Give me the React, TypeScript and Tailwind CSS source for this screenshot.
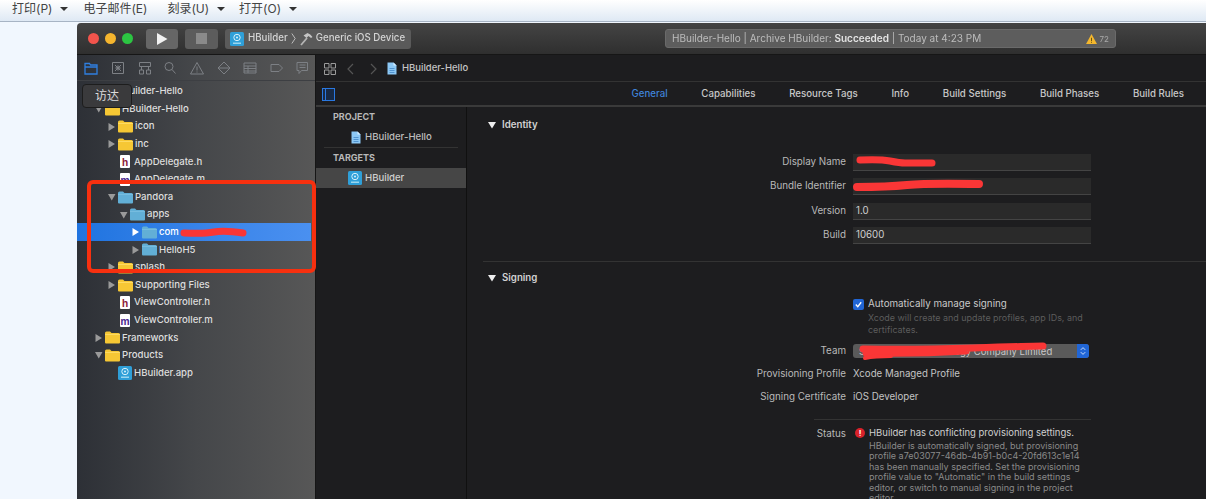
const font = "font-['Inter','Noto_Sans_CJK_SC',sans-serif]";

const Caret = () => <span className="ml-[8px] w-0 h-0 border-x-[4px] border-x-transparent border-t-[4px] border-t-[#333]" />;

const Folder = ({ blue }: { blue?: boolean }) => (
  <svg viewBox="0 0 15 13" className="w-[15px] h-[13px] shrink-0">
    <path d="M0 2q0-1.500 1.500-1.500h3.500l1.500 1.500h7q1.500 0 1.500 1.500v8q0 1-1 1h-13q-1 0-1-1z" fill={blue ? "#62afd6" : "#f6c734"} />
    <path d="M0 3.200h15v.8h-15z" fill={blue ? "#7cc0e2" : "#ffdf6e"} />
  </svg>
);

const CodeFile = ({ letter, color }: { letter: string; color: string }) => (
  <span className="relative w-[10px] h-[13px] ml-[3px] mr-[2px] bg-white rounded-[1px] flex items-end justify-center shrink-0">
    <span className="font-bold text-[10px] leading-[11px]" style={{ color }}>{letter}</span>
  </span>
);

const DocIcon = () => (
  <svg viewBox="0 0 10 13" className="w-[10px] h-[13px] shrink-0">
    <path d="M0.500 0.500h6l3 3v9h-9z" fill="#8cc8f5" />
    <path d="M6.500 0.500l3 3h-3z" fill="#d7eeff" />
    <path d="M2.500 6h5v.8h-5zM2.500 8h5v.8h-5zM2.500 10h5v.8h-5z" fill="#3f83c4" />
  </svg>
);

const AppIcon = () => (
  <svg viewBox="0 0 14 14" className="w-[14px] h-[14px] shrink-0">
    <rect width="14" height="14" rx="1.500" fill="#2f9fd8" />
    <circle cx="7" cy="5.500" r="3.200" fill="none" stroke="#d8f1fb" strokeWidth="1" />
    <circle cx="7" cy="5.500" r="1" fill="#d8f1fb" />
    <path d="M3 10.500h8v1.500h-8z" fill="#9ad6ef" />
  </svg>
);

const Tri = ({ open, white }: { open?: boolean; white?: boolean }) => (
  <svg viewBox="0 0 8 8" className="w-[8px] h-[8px] mr-[2px] shrink-0">
    <path d={open ? "M0 1h7.500l-3.750 6.500z" : "M0.500 0v8l6.500-4z"} fill={white ? "#ffffff" : "#9a9a9a"} />
  </svg>
);

type Row = {
  label: string;
  pad: string;
  kind: "yellow" | "blue" | "h" | "m" | "app" | "doc";
  tri?: "open" | "closed";
  selected?: boolean;
};

const rows: Row[] = [
  { label: "HBuilder-Hello", pad: "pl-[17px]", kind: "doc", tri: "open" },
  { label: "HBuilder-Hello", pad: "pl-[18px]", kind: "yellow", tri: "open" },
  { label: "icon", pad: "pl-[31px]", kind: "yellow", tri: "closed" },
  { label: "inc", pad: "pl-[31px]", kind: "yellow", tri: "closed" },
  { label: "AppDelegate.h", pad: "pl-[40px]", kind: "h" },
  { label: "AppDelegate.m", pad: "pl-[40px]", kind: "m" },
  { label: "Pandora", pad: "pl-[31px]", kind: "blue", tri: "open" },
  { label: "apps", pad: "pl-[43px]", kind: "blue", tri: "open" },
  { label: "com", pad: "pl-[55px]", kind: "blue", tri: "closed", selected: true },
  { label: "HelloH5", pad: "pl-[55px]", kind: "blue", tri: "closed" },
  { label: "splash", pad: "pl-[31px]", kind: "yellow", tri: "closed" },
  { label: "Supporting Files", pad: "pl-[31px]", kind: "yellow", tri: "closed" },
  { label: "ViewController.h", pad: "pl-[40px]", kind: "h" },
  { label: "ViewController.m", pad: "pl-[40px]", kind: "m" },
  { label: "Frameworks", pad: "pl-[18px]", kind: "yellow", tri: "closed" },
  { label: "Products", pad: "pl-[18px]", kind: "yellow", tri: "open" },
  { label: "HBuilder.app", pad: "pl-[40px]", kind: "app" },
];

const RowIcon = ({ row }: { row: Row }) => {
  if (row.kind === "yellow") return <Folder />;
  if (row.kind === "blue") return <Folder blue />;
  if (row.kind === "h") return <CodeFile letter="h" color="#8e1d3c" />;
  if (row.kind === "m") return <CodeFile letter="m" color="#4b2a8f" />;
  if (row.kind === "app") return <span className="ml-[1px]"><AppIcon /></span>;
  return <DocIcon />;
};

const NavIcons = () => (
  <svg viewBox="0 0 230 14" className="w-[230px] h-[14px]" fill="none" stroke="#7d8085" strokeWidth="1">
    <path d="M1 2.500h4.500l1 1.500h6.500v9h-12zM1 6h12" stroke="#2f7fe0" strokeWidth="1.300" />
    <path d="M28.500 1.500h11v11h-11zM31 4l6 6M37 4l-6 6" />
    <circle cx="34" cy="7" r="2" />
    <path d="M55.500 1.500h11v4h-11zM55.500 9h4v4h-4zM62.500 9h4v4h-4zM57.500 5.500v3.500M64.500 5.500v3.500" />
    <circle cx="85" cy="5.500" r="4" />
    <path d="M88 8.500l3.500 4" />
    <path d="M113 1.500l6.500 11.500h-13zM113 5.500v4M113 10.500v1" />
    <path d="M140 1l6 6-6 6-6-6zM134 7h12" />
    <path d="M160 2h12v10h-12zM160 5h12M160 7.500h12M160 10h12M164 5v7" />
    <path d="M187 3.500h8l3.500 3.500-3.500 3.500h-8z" />
    <path d="M213 1.500h10.500v8h-6l-2.500 3v-3h-2zM215.500 4h6M215.500 6.500h6" />
  </svg>
);

const Tree = () => (
  <div className="flex flex-col pt-[1.700px]">
    {rows.map((r) => (
      <div
        key={r.label + r.pad}
        className={
          "flex items-center h-[17.600px] text-[9.600px] font-medium whitespace-nowrap " +
          r.pad +
          (r.selected ? " bg-gradient-to-r from-[#1f74e0] to-[#4a90f0] text-white w-[234px]" : " text-[#dedede]")
        }
      >
        {r.tri ? <Tri open={r.tri === "open"} white={r.selected} /> : null}
        <RowIcon row={r} />
        <span className="ml-[2px]">{r.label}</span>
      </div>
    ))}
  </div>
);

const Sidebar = () => (
  <div className="w-[239px] shrink-0 flex flex-col bg-gradient-to-r from-[#2d3036] via-[#45474a] to-[#575757] border-r border-[#161616]">
    <div className="h-[26px] flex items-center pl-[7px] border-b border-[#3d3f43] shrink-0">
      <NavIcons />
    </div>
    <Tree />
  </div>
);

const tabs = ["General", "Capabilities", "Resource Tags", "Info", "Build Settings", "Build Phases", "Build Rules"];

const Label = ({ children }: { children: React.ReactNode }) => (
  <div className="text-right text-[#b9b9b9] text-[9.800px]">{children}</div>
);

const Field = ({ label, value }: { label: string; value?: string }) => (
  <div className="grid grid-cols-[363px_238px] gap-x-[7px] items-center h-[17px]">
    <Label>{label}</Label>
    <div className="h-[17px] bg-[#2a2a2a] border-b border-[#444] pl-[3px] text-[#d0d0d0] text-[9.700px] leading-[16px]">{value}</div>
  </div>
);

const Section = ({ title }: { title: string }) => (
  <div className="flex items-center pl-[5px] text-[#d2d2d2] font-semibold text-[9.700px]">
    <svg viewBox="0 0 8 8" className="w-[8px] h-[8px] mr-[6px]"><path d="M0 1h8l-4 6.500z" fill="#eeeeee" /></svg>
    {title}
  </div>
);

const Form = () => (
  <div className="flex-1 min-w-0 overflow-hidden pl-[16px] pt-[1px] border-l border-[#101010]">
    <div className="h-[154px] border-b border-[#333]">
      <div className="h-[34px] flex items-center"><Section title="Identity" /></div>
      <div className="mt-[12px] flex flex-col gap-[7.300px]">
        <Field label="Display Name" value="" />
        <Field label="Bundle Identifier" value="" />
        <Field label="Version" value="1.0" />
        <Field label="Build" value="10600" />
      </div>
    </div>
    <div className="h-[32px] flex items-center"><Section title="Signing" /></div>
    <div className="grid grid-cols-[363px_238px] gap-x-[7px]">
      <div />
      <div className="pt-[5px]">
        <div className="flex items-center h-[11px]">
          <span className="w-[11px] h-[11px] rounded-[2px] bg-[#2166d6] flex items-center justify-center mr-[4px]">
            <svg viewBox="0 0 10 10" className="w-[9px] h-[9px]"><path d="M2 5l2.200 2.500 3.800-5" fill="none" stroke="#ffffff" strokeWidth="1.500" /></svg>
          </span>
          <span className="text-[#c9c9c9] text-[9.800px]">Automatically manage signing</span>
        </div>
        <div className="pl-[15px] mt-[2px] text-[#5c5c5c] text-[8.950px] leading-[11.500px] w-[232px]">Xcode will create and update profiles, app IDs, and certificates.</div>
      </div>
    </div>
    <div className="grid grid-cols-[363px_236px] gap-x-[7px] items-center mt-[9px] h-[14px]">
      <Label>Team</Label>
      <div className="relative h-[14px] rounded-[3px] bg-[#5a5a5a] pl-[6px] text-[#c8c8c8] text-[9.500px] leading-[15px] whitespace-nowrap">
        ShXXXXXXX Technology Company Limited
        <span className="absolute right-0 top-0 w-[12px] h-[14px] rounded-r-[3px] bg-[#2166d6] flex items-center justify-center">
          <svg viewBox="0 0 8 12" className="w-[6px] h-[10px]"><path d="M1 4.500l3-3 3 3M1 7.500l3 3 3-3" fill="none" stroke="#ffffff" strokeWidth="1" /></svg>
        </span>
      </div>
    </div>
    <div className="grid grid-cols-[363px_238px] gap-x-[7px] items-center mt-[9px] h-[14px]">
      <Label>Provisioning Profile</Label>
      <div className="text-[#c4c4c4] text-[9.700px]">Xcode Managed Profile</div>
    </div>
    <div className="grid grid-cols-[363px_238px] gap-x-[7px] items-center mt-[9px] h-[14px]">
      <Label>Signing Certificate</Label>
      <div className="text-[#c4c4c4] text-[9.700px]">iOS Developer</div>
    </div>
    <div className="ml-[331px] w-[277px] border-b border-[#333] mt-[15px]" />
    <div className="grid grid-cols-[363px_238px] gap-x-[7px] mt-[7px]">
      <Label>Status</Label>
      <div className="flex">
        <span className="w-[10px] h-[10px] mt-[1px] ml-[2px] mr-[4px] rounded-full bg-[#d8222a] text-white text-[8px] font-bold leading-[10px] text-center shrink-0">!</span>
        <div>
          <div className="text-[#cfcfcf] text-[9.500px] leading-[12px] whitespace-nowrap">HBuilder has conflicting provisioning settings.</div>
          <div className="text-[#8a8a8a] text-[9px] leading-[10.600px] mt-[1.500px] w-[218px]">
            HBuilder is automatically signed, but provisioning profile a7e03077-46db-4b91-b0c4-20fd613c1e14 has been manually specified. Set the provisioning profile value to "Automatic" in the build settings editor, or switch to manual signing in the project editor.
          </div>
        </div>
      </div>
    </div>
  </div>
);

const Main = () => (
  <div className="flex-1 min-w-0 flex flex-col bg-[#1d1d1f]">
    <div className="h-[27px] shrink-0 flex items-center pl-[8px] pt-[1px] border-b border-[#333] text-[#c4c4c4] text-[9.500px] font-medium">
      <svg viewBox="0 0 12 12" className="w-[12px] h-[12px]" fill="none" stroke="#9b9b9b" strokeWidth="1">
        <path d="M.5.500h4.500v4.500h-4.500zM7 .500h4.500v4.500h-4.500zM.5 7h4.500v4.500h-4.500zM7 7h4.500v4.500h-4.500z" />
      </svg>
      <svg viewBox="0 0 30 12" className="w-[30px] h-[12px] ml-[11px] mr-[10px]" fill="none" stroke="#555" strokeWidth="1.200">
        <path d="M6 1l-5 5 5 5M24 1l5 5-5 5" />
      </svg>
      <DocIcon />
      <span className="ml-[5px]">HBuilder-Hello</span>
    </div>
    <div className="h-[25px] shrink-0 flex items-center border-b-2 border-[#3a3a3a] relative">
      <span className="absolute left-[6px] top-[6px] w-[13px] h-[13px] border-[1.500px] border-[#2a78e0] bg-[#182a45]">
        <span className="block w-[3px] h-full border-r border-[#2a78e0]" />
      </span>
      <div className="ml-auto mt-[2px] pr-[22px] flex gap-[33.700px] text-[9.700px] font-medium text-[#c8c8c8]">
        {tabs.map((t, i) => (
          <span key={t} className={i === 0 ? "text-[#3f82d8]" : ""}>{t}</span>
        ))}
      </div>
    </div>
    <div className="flex-1 min-h-0 flex">
      <div className="w-[150px] shrink-0 flex flex-col text-[9.600px] font-medium">
        <div className="h-[18px] mt-[1px] flex items-center pl-[17px] text-[#b8b8b8] font-bold text-[9px]">PROJECT</div>
        <div className="h-[20px] mt-[1px] flex items-center pl-[35px] text-[#bdbdbd]">
          <DocIcon /><span className="ml-[4px]">HBuilder-Hello</span>
        </div>
        <div className="mx-[8px] border-b border-[#333]" />
        <div className="h-[19px] flex items-center pl-[17px] text-[#b8b8b8] font-bold text-[9px]">TARGETS</div>
        <div className="h-[20px] mt-[1px] bg-[#464646] flex items-center pl-[32px] text-[#d0d0d0]">
          <AppIcon /><span className="ml-[3px]">HBuilder</span>
        </div>
      </div>
      <Form />
    </div>
  </div>
);

const Toolbar = () => (
  <div className="h-[32px] shrink-0 flex items-center bg-gradient-to-b from-[#444444] to-[#2f2f2f] border-b border-[#161616] rounded-tl-[4px] relative">
    <div className="flex gap-[6px] pl-[11px]">
      <span className="w-[11px] h-[11px] rounded-full bg-[#f2544c]" />
      <span className="w-[11px] h-[11px] rounded-full bg-[#f5b52e]" />
      <span className="w-[11px] h-[11px] rounded-full bg-[#2cc542]" />
    </div>
    <div className="ml-[13px] w-[32px] h-[20px] rounded-[3px] bg-[#666] flex items-center justify-center">
      <svg viewBox="0 0 12 12" className="w-[12px] h-[12px]"><path d="M1 0v12l10.500-6z" fill="#f2f2f2" /></svg>
    </div>
    <div className="ml-[7px] w-[33px] h-[20px] rounded-[3px] bg-[#5c5c5c] flex items-center justify-center">
      <span className="w-[11px] h-[11px] bg-[#8a8a8a]" />
    </div>
    <div className="ml-[7px] w-[186px] h-[20px] rounded-[3px] bg-[#5a5a5a] flex items-center pl-[5px] text-[9.700px] font-medium text-[#d4d4d4] whitespace-nowrap">
      <AppIcon />
      <span className="ml-[4px]">HBuilder</span>
      <svg viewBox="0 0 6 14" className="w-[5px] h-[13px] mx-[3px]"><path d="M1 1l4 6-4 6" fill="none" stroke="#cfcfcf" strokeWidth="1" /></svg>
      <svg viewBox="0 0 14 14" className="w-[14px] h-[14px] mr-[3px]">
        <path d="M2 13l6-7" fill="none" stroke="#b4b4b4" strokeWidth="1.800" />
        <path d="M4.500 3.500l4-2.500q3 1 5 4l-1.500 1-2.500-2-2 2z" fill="#c4c4c4" />
      </svg>
      Generic iOS Device
    </div>
    <div className="ml-[254px] w-[451px] h-[19px] rounded-[3px] bg-[#5d5d5d] border border-[#6a6a6a] flex items-center pl-[6px] pr-[6px] text-[10px] text-[#bcbcbc] whitespace-nowrap">
      HBuilder-Hello | Archive HBuilder:&nbsp;<b className="font-semibold text-[#e4e4e4]">Succeeded</b>&nbsp;| Today at 4:23 PM
      <svg viewBox="0 0 12 11" className="ml-auto w-[11px] h-[10px]"><path d="M6 0l6 11h-12z" fill="#f4b72d" /><path d="M5.500 4h1v4h-1zM5.500 9h1v1h-1z" fill="#5d4a12" /></svg>
      <span className="ml-[3px] text-[8px] text-[#a9a9a9]">72</span>
    </div>
  </div>
);

const Menu = () => (
  <div className="h-[22px] shrink-0 flex items-center pl-[12px] pb-[3px] bg-gradient-to-b from-[#ffffff] to-[#dfe9f4] border-b border-[#a7b4c4] text-[12px] text-[#444]">
    <span>打印(P)</span><Caret />
    <span className="ml-[15px]">电子邮件(E)</span>
    <span className="ml-[20px]">刻录(U)</span><Caret />
    <span className="ml-[14px]">打开(O)</span><Caret />
  </div>
);

export default function App() {
  return (
    <div className={"relative w-[1206px] h-[499px] overflow-hidden flex flex-col bg-[#f1f7fe] " + font}>
      <Menu />
      <div className="flex-1 min-h-0 flex pl-[77px] pt-[1px] blur-[0.3px]">
        <div className="flex-1 min-w-0 flex flex-col">
          <Toolbar />
          <div className="flex-1 min-h-0 flex">
            <Sidebar />
            <Main />
          </div>
        </div>
      </div>
      {/* tooltip */}
      <div className="absolute left-[82px] top-[84px] w-[50px] h-[24px] rounded-[4px] bg-[#3a3a3c] border border-[#1d1d1d] text-[#dcdcdc] text-[12px] leading-[22px] text-center">访达</div>
      {/* red annotation box */}
      <div className="absolute left-[87px] top-[180px] w-[229px] h-[93px] border-[4px] border-[#f7300f] rounded-[6px]" />
      {/* red scribbles over the hidden text */}
      <svg className="absolute left-0 top-0 w-[1206px] h-[499px] pointer-events-none" viewBox="0 0 1206 499" fill="none" stroke="#fa3636" strokeLinecap="round">
        <path d="M860 160q20-1 30 1t15 2 27 0" strokeWidth="7" />
        <path d="M857 187q30 0 50-2t72-1" strokeWidth="8" />
        <path d="M184 233q20 1 30-1t29 1" strokeWidth="7" />
        <path d="M863 349q50 1 110-1t70-2M866 353q50 1 100-2" strokeWidth="7" />
        <path d="M865 358q10-2 26-2" strokeWidth="4" />
      </svg>
    </div>
  );
}
